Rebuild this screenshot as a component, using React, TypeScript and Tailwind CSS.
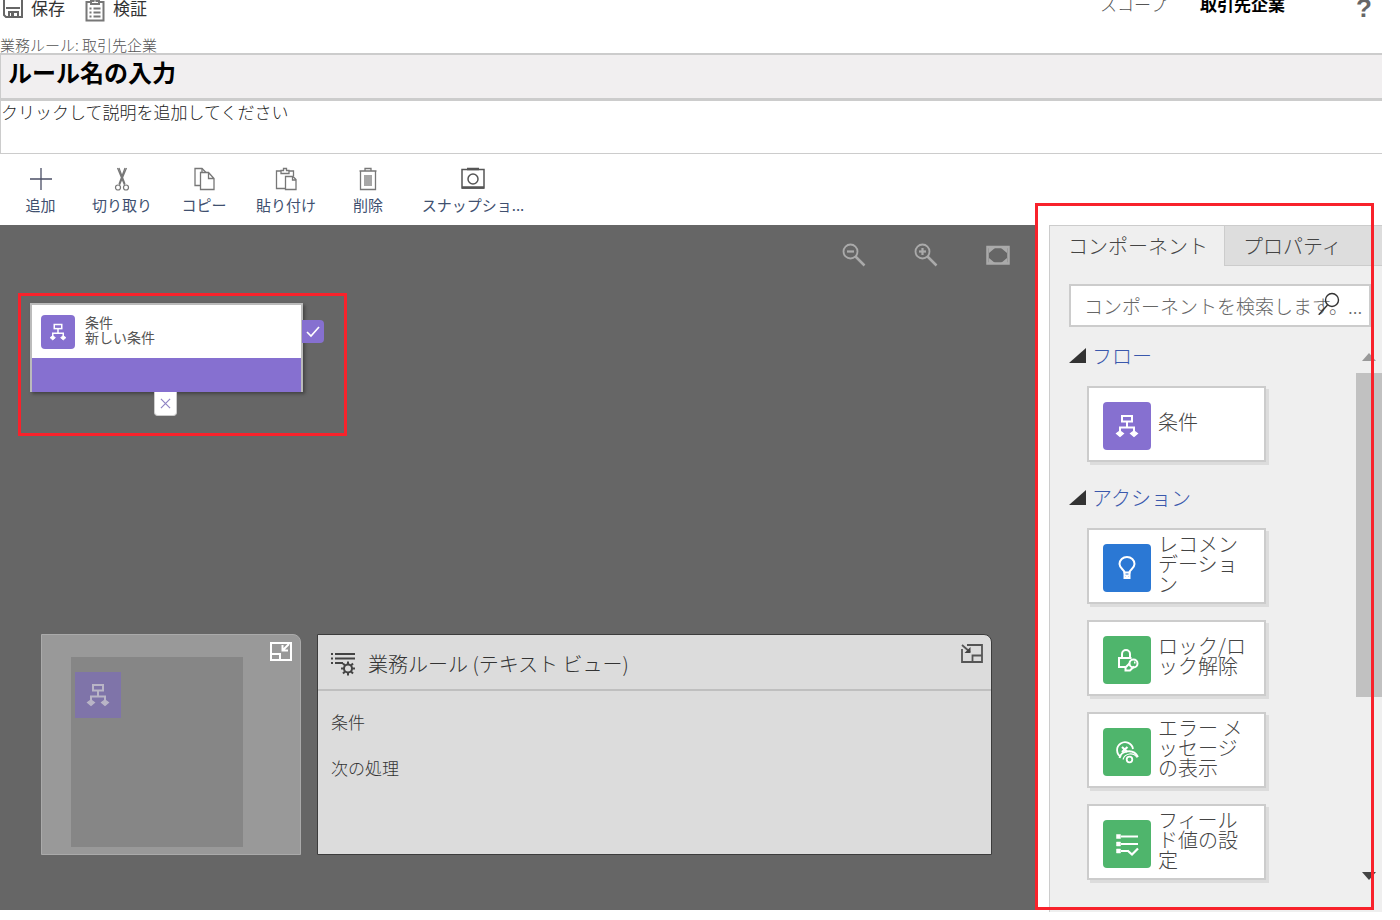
import type { ReactNode } from "react";

type IconProps = { className?: string };

function FlowIcon({ className }: IconProps) {
  return (
    <svg viewBox="0 0 24 24" className={className} fill="none" stroke="currentColor" strokeWidth="2" aria-hidden="true">
      <rect x="7" y="2" width="10" height="5.500" />
      <path d="M12 7.500v6M5 19v-5.500h14V19" />
      <path d="M1.500 19.500L5 17l3.500 2.500L5 22.500zM15.500 19.500L19 17l3.500 2.500-3.500 3z" fill="currentColor" strokeWidth="1.200" />
    </svg>
  );
}

function BulbIcon({ className }: IconProps) {
  return (
    <svg viewBox="0 0 24 24" className={className} fill="none" stroke="currentColor" strokeWidth="2" aria-hidden="true">
      <path d="M9.500 16.500c0-3-5-4-5-8.500a7.500 7 0 0 1 15 0c0 4.500-5 5.500-5 8.500z" />
      <path d="M9.500 16v6h5v-6M9.500 19.500h5M12 19.500v3" />
    </svg>
  );
}

function LockIcon({ className }: IconProps) {
  return (
    <svg viewBox="0 0 24 24" className={className} fill="none" stroke="currentColor" strokeWidth="2" aria-hidden="true">
      <path d="M10.500 19H4V10h12.500" />
      <path d="M7 10V6a4 4 0 0 1 8 0v4" />
      <path d="M14.500 15.500l-4 4v3h4.500l4-4" />
      <circle cx="18.500" cy="15.500" r="4" />
      <path d="M19 14.500h1.500" />
    </svg>
  );
}

function ErrorEyeIcon({ className }: IconProps) {
  return (
    <svg viewBox="0 0 24 24" className={className} fill="none" stroke="currentColor" strokeWidth="1.800" aria-hidden="true">
      <path d="M6 17A8 8 0 1 1 18 9" />
      <path d="M7 7l5.500 5M12.500 7L7 12" strokeWidth="2.200" />
      <path d="M4.500 18c1.500-7.500 14-10 18.500-1" />
      <path d="M8 19.500c2-6.500 10.500-7.500 14-2" strokeWidth="1.200" />
      <circle cx="14.500" cy="19.500" r="2.800" />
    </svg>
  );
}

function FieldIcon({ className }: IconProps) {
  return (
    <svg viewBox="0 0 24 24" className={className} fill="none" stroke="currentColor" strokeWidth="2" aria-hidden="true">
      <path d="M6 4.500h17M6 12h17M6 19h7" />
      <path d="M1.500 2.500h4v4h-4zM1.500 10h4v4h-4zM1.500 17h4v4h-4z" fill="currentColor" strokeWidth="0.500" />
      <path d="M12.500 18.500l4.500 4 6-6" strokeWidth="2.200" />
    </svg>
  );
}

function SaveIcon() {
  return (
    <svg viewBox="0 0 20 20" className="size-5 text-[#666]" fill="none" stroke="currentColor" strokeWidth="2" aria-hidden="true">
      <path d="M1 0h18v19H3l-2-2z" />
      <path d="M3 10h14M6 19v-5h9v5" />
      <path d="M8 15h3v4H8z" fill="currentColor" stroke="none" />
    </svg>
  );
}

function ValidateIcon() {
  return (
    <svg viewBox="0 0 20 24" className="h-6 w-5 text-[#777]" fill="none" stroke="currentColor" strokeWidth="2" aria-hidden="true">
      <path d="M6 4H1.500v18.500h17V4H14" />
      <path d="M6 6V3h2.500V1.500h3V3H14v3z" />
      <path d="M4.500 10.500h2M8.500 10.500h7M4.500 14.500h2M8.500 14.500h7M4.500 18.500h2M8.500 18.500h7" />
    </svg>
  );
}

const toolIcon = "size-6";

const tools: { label: string; width: string; icon: ReactNode }[] = [
  {
    label: "追加",
    width: "w-[81px]",
    icon: (
      <svg viewBox="0 0 24 24" className={toolIcon} fill="none" stroke="#4b4f66" strokeWidth="1.300" aria-hidden="true">
        <path d="M12 1v22M1 12h22" />
      </svg>
    ),
  },
  {
    label: "切り取り",
    width: "w-[82px]",
    icon: (
      <svg viewBox="0 0 24 24" className={toolIcon} fill="none" stroke="#777" strokeWidth="1.200" aria-hidden="true">
        <path d="M7.500 1l7 17M9 1l6 16M16.500 1L9.500 18M15 1l-6 16" />
        <circle cx="8" cy="20.500" r="2.500" />
        <circle cx="16" cy="20.500" r="2.500" />
      </svg>
    ),
  },
  {
    label: "コピー",
    width: "w-[82px]",
    icon: (
      <svg viewBox="0 0 24 24" className={toolIcon} fill="none" stroke="#777" strokeWidth="1.300" aria-hidden="true">
        <path d="M8 18.500H3V1.500h7l4 4" />
        <path d="M8.500 5.500h8l5.500 6v11H8.500zM16.500 5.500v6H22M10 1.500v4" />
      </svg>
    ),
  },
  {
    label: "貼り付け",
    width: "w-[82px]",
    icon: (
      <svg viewBox="0 0 24 24" className={toolIcon} fill="none" stroke="#777" strokeWidth="1.300" aria-hidden="true">
        <path d="M11 21.500H2.500V4H7M15 4h4.500v5" />
        <path d="M7 6.500V3.500h2.500v-2h3v2H15v3z" />
        <path d="M11.500 9.500H19l3 3v10H11.500zM18.500 9.500v3.500H22" />
      </svg>
    ),
  },
  {
    label: "削除",
    width: "w-[82px]",
    icon: (
      <svg viewBox="0 0 24 24" className={toolIcon} fill="none" stroke="#777" strokeWidth="1.300" aria-hidden="true">
        <path d="M3.500 4h17M9 4V1.500h6V4M4.500 4v18.500h15V4" />
        <path d="M9 8v11M11 8v11M13 8v11M15 8v11" />
      </svg>
    ),
  },
  {
    label: "スナップショ...",
    width: "w-[128px]",
    icon: (
      <svg viewBox="0 0 24 24" className={toolIcon} fill="none" stroke="#555" strokeWidth="1.500" aria-hidden="true">
        <path d="M1 2.500h22V21H1z" />
        <path d="M6 2h12M1 20.500h22" strokeWidth="2.500" />
        <circle cx="12" cy="12" r="5" />
      </svg>
    ),
  },
];

const actions = [
  { label: "レコメンデーション", color: "bg-[#2b78d4]", Icon: BulbIcon },
  { label: "ロック/ロック解除", color: "bg-[#4fb56c]", Icon: LockIcon },
  { label: "エラー メッセージの表示", color: "bg-[#4fb56c]", Icon: ErrorEyeIcon },
  { label: "フィールド値の設定", color: "bg-[#4fb56c]", Icon: FieldIcon },
];

function ComponentCard({ label, color, Icon }: { label: string; color: string; Icon: (p: IconProps) => ReactNode }) {
  return (
    <button
      type="button"
      className="flex h-[76px] w-[179px] items-center gap-[7px] border-2 border-[#ccc] bg-white pl-[14px] text-left shadow-[3px_3px_0_#dcdcdc]"
    >
      <span className={`mt-1 flex size-12 shrink-0 items-center justify-center rounded ${color} text-white`}>
        <Icon className="size-6" />
      </span>
      <span className="w-[90px] break-all pb-1 text-[20px] leading-5 text-[#444]">{label}</span>
    </button>
  );
}

function SectionHeading({ children }: { children: ReactNode }) {
  return (
    <h2 className="flex h-6 items-center gap-1.5 text-[20px] leading-6 text-[#3a58ac]">
      <svg viewBox="0 0 17 16" className="h-4 w-[17px]" aria-hidden="true">
        <path d="M17 0v15H0z" fill="#333" />
      </svg>
      {children}
    </h2>
  );
}

function ZoomIcon({ plus }: { plus?: boolean }) {
  return (
    <svg viewBox="0 0 24 24" className="size-6" fill="none" stroke="currentColor" strokeWidth="1.800" aria-hidden="true">
      <circle cx="8.500" cy="8.500" r="7" />
      <path d="M5 8.500h7" strokeWidth="2.200" />
      {plus && <path d="M8.500 5v7" strokeWidth="2.200" />}
      <path d="M13.500 13.500l9 9" strokeWidth="2.500" />
    </svg>
  );
}

export default function App() {
  return (
    <div className="overflow-hidden bg-white pr-[18px] font-['Noto_Sans_CJK_JP',sans-serif] font-light">
      <header>
        <div className="flex h-9 items-start justify-between pr-[10px]">
          <div className="flex h-4 items-center gap-5 text-[17px] font-normal text-[#333]">
            <button type="button" className="flex items-center gap-2 pl-[3px]">
              <SaveIcon />
              保存
            </button>
            <button type="button" className="flex items-center gap-2">
              <span className="pt-1">
                <ValidateIcon />
              </span>
              検証
            </button>
          </div>
          <div className="flex h-2 items-center text-[17px]">
            <span className="w-[100px] text-[#555]">スコープ</span>
            <span className="w-[156px] font-bold text-black">取引先企業</span>
            <button type="button" className="w-4 pt-2 font-['Liberation_Sans',sans-serif] text-[26px] font-bold text-[#666]">
              ?
            </button>
          </div>
        </div>
        <p className="h-[17px] text-[15px] leading-[17px] text-[#555]">業務ルール: 取引先企業</p>
        <input
          aria-label="ルール名"
          defaultValue="ルール名の入力"
          className="block h-12 w-full border-t-2 border-b-[3px] border-l border-[#ccc] bg-[#f1eff0] px-[7px] pb-[10px] text-[24px] font-bold text-black outline-none"
        />
        <textarea
          aria-label="説明"
          defaultValue="クリックして説明を追加してください"
          className="block h-[53px] w-full resize-none border-b border-l border-[#ccc] text-[17px] leading-[22px] text-[#222] outline-none"
        />
      </header>

      <div className="flex h-[71px] items-start pt-[13px]" role="toolbar" aria-label="編集">
        {tools.map((t) => (
          <button key={t.label} type="button" className={`flex flex-col items-center gap-0.5 ${t.width}`}>
            {t.icon}
            <span className="text-[15px] leading-6 font-normal whitespace-nowrap text-[#40506f]">{t.label}</span>
          </button>
        ))}
      </div>

      <div className="flex">
        <main className="relative mb-0.5 flex min-h-[685px] min-w-0 flex-1 flex-col justify-between bg-[#666] pt-[18px] pr-[25px] pb-[55px]">
          <div className="flex justify-end gap-12 text-[#aaa]">
            <button type="button" aria-label="縮小">
              <ZoomIcon />
            </button>
            <button type="button" aria-label="拡大">
              <ZoomIcon plus />
            </button>
            <button type="button" aria-label="全体表示">
              <svg viewBox="0 0 24 24" className="size-6" aria-hidden="true">
                <path d="M1.500 4h21v16.500h-21z" fill="none" stroke="currentColor" strokeWidth="2.500" />
                <path d="M3 5h6L3 10zM21 5h-6l6 5zM3 20h6l-6-5zM21 20h-6l6-5z" fill="currentColor" />
              </svg>
            </button>
          </div>

          <div className="absolute top-[68px] left-[18px] h-[143px] w-[329px] border-[3px] border-[#f8222b]">
            <div className="absolute top-[7px] left-[9px] w-[273px] border-2 border-b-0 border-[#bbb] bg-white shadow-[2px_2px_3px_#444]">
              <div className="flex h-[53px] items-center gap-[10px] pl-[9px]">
                <span className="flex size-[34px] items-center justify-center rounded bg-[#8670d0] text-white">
                  <FlowIcon className="size-[18px]" />
                </span>
                <p className="pb-[3px] text-[14px] leading-[15px] font-normal text-[#555]">
                  条件
                  <br />
                  新しい条件
                </p>
              </div>
              <div className="h-[34px] bg-[#8670d0]" />
            </div>
            <span className="absolute top-6 left-[281px] flex h-[23px] w-[22px] items-center justify-center rounded-r bg-[#8670d0]">
              <svg viewBox="0 0 14 12" className="h-3 w-3.5" fill="none" stroke="#fff" strokeWidth="1.700" aria-label="はい">
                <path d="M1 6l4 4 8-9" />
              </svg>
            </span>
            <span className="absolute top-24 left-[133px] flex h-6 w-[23px] items-center justify-center rounded-b-[4px] border border-t-0 border-[#ccc] bg-white">
              <svg viewBox="0 0 12 12" className="size-[11px]" fill="none" stroke="#8f84c4" strokeWidth="1.300" aria-label="いいえ">
                <path d="M1 1l10 10M11 1L1 11" />
              </svg>
            </span>
          </div>

          <div className="flex gap-4 pl-[41px] pr-[18px]">
            <section aria-label="ミニマップ" className="relative h-[221px] w-[260px] shrink-0 rounded-tr-lg border border-[#aaa] bg-[#999] pt-[22px] pl-[29px]">
              <div className="h-[190px] w-[172px] bg-[#868686] pt-[15px] pl-1">
                <span className="flex size-[46px] items-center justify-center bg-[#7f74a9] text-[#b9b5c6]">
                  <FlowIcon className="size-6" />
                </span>
              </div>
              <button type="button" aria-label="ミニマップを折りたたむ" className="absolute top-[7px] right-2">
                <svg viewBox="0 0 22 19" className="h-[19px] w-[22px]" fill="none" stroke="#fff" strokeWidth="2" aria-hidden="true">
                  <path d="M1 1h20v17H1zM1 12h9v6M13 8l6-6M12.500 3v5.500H18" />
                </svg>
              </button>
            </section>
            <section className="h-[221px] min-w-0 flex-1 rounded-tr-lg border border-[#3c3c3c] bg-[#dcdcdc] text-[#333]">
              <header className="flex h-[56px] items-center gap-3 border-b-2 border-[#bfbfbf] pt-1 pr-2 pl-[13px]">
                <svg viewBox="0 0 25 24" className="h-6 w-[25px]" fill="none" stroke="#444" strokeWidth="2" aria-hidden="true">
                  <path d="M0 2h2M4 2h20M0 6.500h2M4 6.500h20M0 11h2M4 11h8" />
                  <circle cx="17" cy="16.500" r="4" />
                  <path d="M17 9.500v3M17 20.500v3M10 16.500h3M21 16.500h3M12 11.500l2 2M20 19.500l2 2M22 11.500l-2 2M14 19.500l-2 2" />
                </svg>
                <h2 className="flex-1 text-[20px] leading-7 whitespace-nowrap">業務ルール (テキスト ビュー)</h2>
                <button type="button" aria-label="テキスト ビューを折りたたむ" className="self-start pt-[5px]">
                  <svg viewBox="0 0 22 19" className="h-[19px] w-[22px]" fill="none" stroke="#555" strokeWidth="1.800" aria-hidden="true">
                    <path d="M6 1h15v17H1V5M21 11.500h-9.500V18M1 1l8 7" />
                    <path d="M9.500 3v6H3.500z" fill="#444" stroke="none" />
                  </svg>
                </button>
              </header>
              <div className="flex flex-col gap-[22px] pt-[19px] pl-[13px] text-[17px] leading-6">
                <p>条件</p>
                <p>次の処理</p>
              </div>
            </section>
          </div>
        </main>

        <aside className="relative flex w-[347px] shrink-0 flex-col pl-[14px]">
          <div className="flex flex-1 flex-col border-t border-l border-[#ccc] bg-[#efefef]">
            <div role="tablist" className="flex h-10 text-[20px] text-[#444]">
              <button type="button" role="tab" aria-selected="true" className="w-[174px] pl-[18px] text-left">
                コンポーネント
              </button>
              <button type="button" role="tab" aria-selected="false" className="flex-1 border-b border-l border-[#ccc] bg-[#ddd] pl-[18px] text-left">
                プロパティ
              </button>
            </div>
            <div className="relative mt-[18px] mr-[11px] ml-[19px]">
              <input
                type="text"
                aria-label="コンポーネントの検索"
                placeholder="コンポーネントを検索します。..."
                className="block h-[43px] w-full border-2 border-[#ccc] bg-white pl-[13px] text-[19px] text-[#555] outline-none placeholder:text-[#666]"
              />
              <svg viewBox="0 0 24 24" className="absolute top-2 right-[30px] size-6" fill="none" stroke="#333" strokeWidth="1.400" aria-hidden="true">
                <circle cx="15" cy="8" r="6.500" />
                <path d="M10.500 13L2 22.500" />
              </svg>
            </div>
            <div className="flex flex-1 pt-[17px] pl-[19px]">
              <div className="min-w-0 flex-1">
                <SectionHeading>フロー</SectionHeading>
                <div className="pt-[18px] pb-6 pl-[18px]">
                  <ComponentCard label="条件" color="bg-[#8670d0]" Icon={FlowIcon} />
                </div>
                <SectionHeading>アクション</SectionHeading>
                <div className="flex flex-col gap-4 pt-[18px] pb-2 pl-[18px]">
                  {actions.map((a) => (
                    <ComponentCard key={a.label} {...a} />
                  ))}
                </div>
              </div>
              <div className="flex w-[26px] flex-col items-center pt-[9px] pb-8" aria-hidden="true">
                <svg viewBox="0 0 14 8" className="h-2 w-3.5">
                  <path d="M7 0l7 8H0z" fill="#999" />
                </svg>
                <div className="mt-3 h-[324px] w-full bg-[#c1c1c1]" />
                <svg viewBox="0 0 14 8" className="mt-auto h-2 w-3.5">
                  <path d="M0 0h14L7 8z" fill="#444" />
                </svg>
              </div>
            </div>
          </div>
          <div className="pointer-events-none absolute -top-[22px] right-2 bottom-[2px] left-0 border-[3px] border-[#f8222b]" />
        </aside>
      </div>
    </div>
  );
}
